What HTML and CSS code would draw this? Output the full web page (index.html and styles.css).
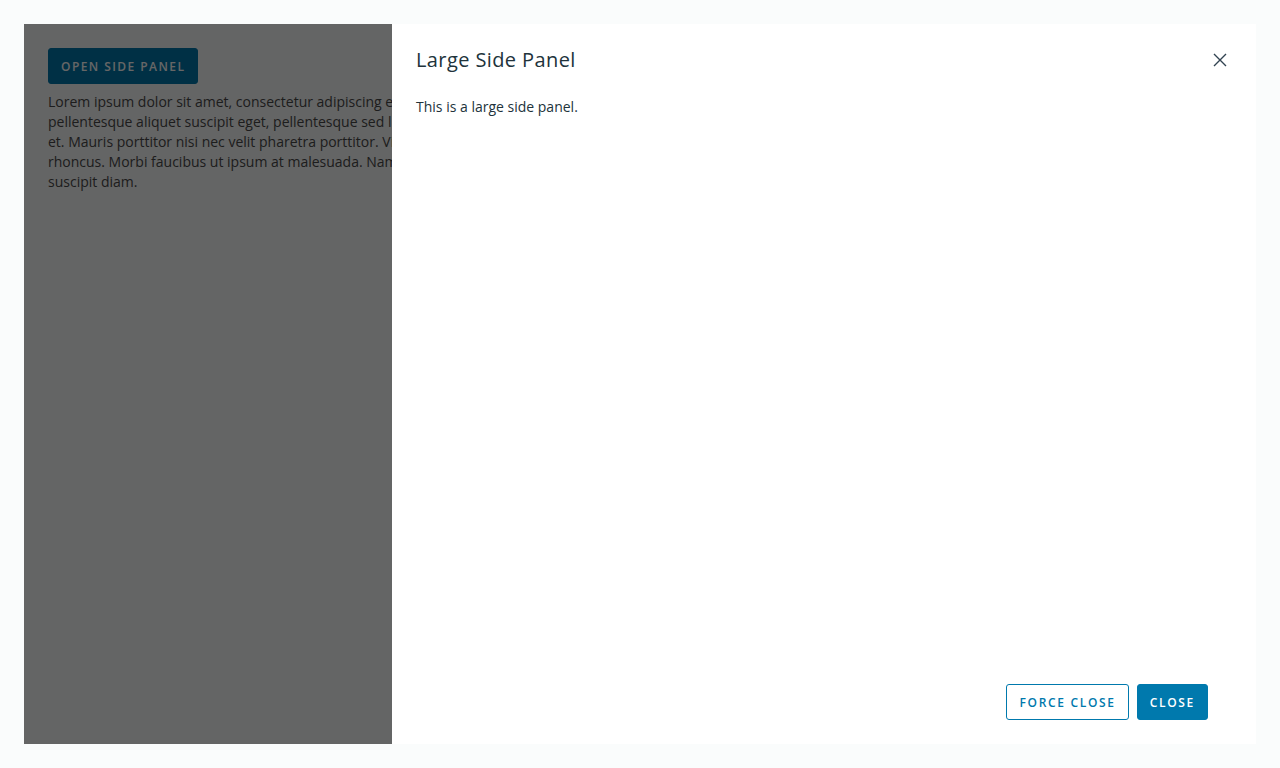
FILE: index.html
```html
<!DOCTYPE html>
<html lang="en">
<head>
<meta charset="utf-8">
<title>Large Side Panel</title>
<link rel="stylesheet" href="styles.css">
</head>
<body>
<div class="frame">
  <div class="content">
    <button class="btn btn-primary btn-open">Open Side Panel</button>
    <p class="lorem">
      <span class="line">Lorem ipsum dolor sit amet, consectetur adipiscing elit. Sed vitae ipsum nec nibh feugiat aliquam.</span>
      <span class="line">pellentesque aliquet suscipit eget, pellentesque sed ligula. Vestibulum ante ipsum primis in faucibus</span>
      <span class="line">et. Mauris porttitor nisi nec velit pharetra porttitor. Vivamus at lorem eu metus tincidunt consequat</span>
      <span class="line">rhoncus. Morbi faucibus ut ipsum at malesuada. Nam consequat odio nec leo tincidunt, ac pulvinar</span>
      <span class="line">suscipit diam.</span>
    </p>
  </div>
  <div class="backdrop"></div>
  <aside class="panel">
    <header class="panel-header">
      <h3 class="panel-title">Large Side Panel</h3>
      <button class="close" aria-label="Close">
        <svg width="14" height="14" viewBox="0 0 14 14"><path d="M1 1L13 13M13 1L1 13" stroke="#314351" stroke-width="1.4" fill="none"/></svg>
      </button>
    </header>
    <div class="panel-body">This is a large side panel.</div>
    <footer class="panel-footer">
      <button class="btn btn-outline">Force Close</button>
      <button class="btn btn-primary">Close</button>
    </footer>
  </aside>
</div>
</body>
</html>
```
FILE: styles.css
```css
html, body {
  margin: 0;
  padding: 0;
  background: #fafcfc;
  font-family: "Open Sans", "Liberation Sans", sans-serif;
  color: #21333b;
}
.frame {
  position: relative;
  margin: 24px;
  height: 720px;
  overflow: hidden;
  background: #fafcfc;
}
.content {
  width: 368px;
  box-sizing: border-box;
  padding: 24px 0 24px 24px;
  overflow: hidden;
}
.lorem {
  margin: 0;
  font-size: 14px;
  line-height: 20px;
  color: #4a4a4a;
}
.line {
  display: block;
  white-space: nowrap;
  overflow: hidden;
}
.btn {
  box-sizing: border-box;
  height: 36px;
  padding: 0 12px;
  border-radius: 3px;
  border: 1px solid #0079ad;
  font-family: inherit;
  font-size: 12px;
  font-weight: 600;
  letter-spacing: 0.14em;
  text-transform: uppercase;
  cursor: pointer;
}
.btn-primary {
  background: #0079ad;
  color: #ffffff;
}
.btn-outline {
  background: #ffffff;
  color: #0079ad;
}
.btn-open {
  display: block;
  margin-bottom: 8px;
  letter-spacing: 0.12em;
}
.backdrop {
  position: absolute;
  inset: 0;
  background: rgba(0, 0, 0, 0.6);
}
.panel {
  position: absolute;
  top: 0;
  right: 0;
  bottom: 0;
  width: 864px;
  background: #ffffff;
  box-sizing: border-box;
  padding: 24px 48px 24px 24px;
  display: flex;
  flex-direction: column;
}
.panel-header {
  display: flex;
  align-items: center;
  justify-content: space-between;
  height: 24px;
  margin-right: -24px;
}
.panel-title {
  margin: 0;
  font-size: 20px;
  font-weight: 400;
  line-height: 24px;
  letter-spacing: 0.02em;
  color: #21333b;
}
.close {
  width: 24px;
  height: 24px;
  padding: 0;
  border: 0;
  background: none;
  display: flex;
  align-items: center;
  justify-content: center;
}
.panel-body {
  margin-top: 25px;
  font-size: 14px;
  line-height: 20px;
  color: #21333b;
  flex: 1;
}
.panel-footer {
  display: flex;
  justify-content: flex-end;
  gap: 8px;
}
```
